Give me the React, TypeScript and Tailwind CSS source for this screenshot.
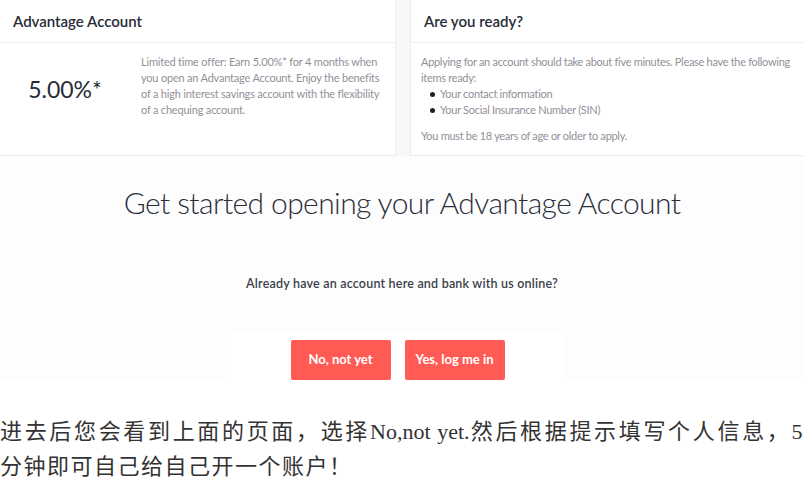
import React from 'react';

const bankFont = { fontFamily: 'Lato, Roboto, "Noto Sans", sans-serif' };

function OfferCard() {
  return (
    <div className="w-[396px] bg-white border-r border-b border-[#ececec]">
      <div className="h-[43px] flex items-center px-[13px] border-b border-[#efefef] text-[15px] font-semibold text-[#272c38]">
        Advantage Account
      </div>
      <div className="flex pt-[11px]">
        <div className="w-[130px] flex justify-center pt-[20px]">
          <span className="text-[23px] text-[#272c38] leading-[30px]">5.00%*</span>
        </div>
        <p className="w-[252px] pl-[11px] text-[11px] leading-[16px] tracking-[-0.2px] text-[#938f99]">
          Limited time offer: Earn 5.00%* for 4 months when you open an Advantage Account. Enjoy the benefits of a high interest savings account with the flexibility of a chequing account.
        </p>
      </div>
    </div>
  );
}

function ReadyCard() {
  return (
    <div className="flex-1 bg-white border-l border-b border-[#ececec]">
      <div className="h-[43px] flex items-center pl-[13px] border-b border-[#efefef] text-[15px] font-semibold text-[#272c38]">
        Are you ready?
      </div>
      <div className="pt-[11px] pl-[10px] pr-[6px] text-[11px] leading-[16px] tracking-[-0.3px] text-[#938f99]">
        <p>Applying for an account should take about five minutes. Please have the following items ready:</p>
        <ul className="pl-[9px]">
          <li className="flex items-center gap-[5px]">
            <span className="w-[5px] h-[5px] rounded-full bg-[#222]" />
            Your contact information
          </li>
          <li className="flex items-center gap-[5px]">
            <span className="w-[5px] h-[5px] rounded-full bg-[#222]" />
            Your Social Insurance Number (SIN)
          </li>
        </ul>
        <p className="mt-[10px]">You must be 18 years of age or older to apply.</p>
      </div>
    </div>
  );
}

export default function App() {
  return (
    <div className="w-[811px] h-[488px] bg-white overflow-hidden">
      <div className="w-[804px] h-[380px] bg-[#fdfdfd] flex flex-col" style={bankFont}>
        <div className="flex gap-[14px] h-[156px] bg-[#f8f8f8]">
          <OfferCard />
          <ReadyCard />
        </div>
        <h1 className="mt-[28px] text-center text-[30px] leading-[36px] font-light tracking-[-0.6px] text-[#2a2f3b]">
          Get started opening your Advantage Account
        </h1>
        <p className="mt-[56px] text-center text-[12.5px] leading-[16px] font-semibold tracking-[0.2px] text-[#3a3f4a]">
          Already have an account here and bank with us online?
        </p>
        <div className="mt-[40px] ml-[230px] w-[335px] h-[48px] bg-white flex justify-center items-end gap-[14px]">
          <button className="w-[100px] h-[40px] bg-[#ff5b54] rounded-[2px] text-white text-[13px] font-bold">
            No, not yet
          </button>
          <button className="w-[100px] h-[40px] bg-[#ff5b54] rounded-[2px] text-white text-[13px] font-bold">
            Yes, log me in
          </button>
        </div>
      </div>
      <div
        className="mt-[34px] w-[804px] text-[22px] leading-[35px] tracking-[1.5px] text-[#333]"
        style={{ fontFamily: '"Liberation Serif", "Noto Sans CJK SC", serif' }}
      >
        <p className="text-justify [text-align-last:justify]">
          进去后您会看到上面的页面，选择<span className="tracking-normal">No,not yet.</span>然后根据提示填写个人信息，5
        </p>
        <p>分钟即可自己给自己开一个账户！</p>
      </div>
    </div>
  );
}
